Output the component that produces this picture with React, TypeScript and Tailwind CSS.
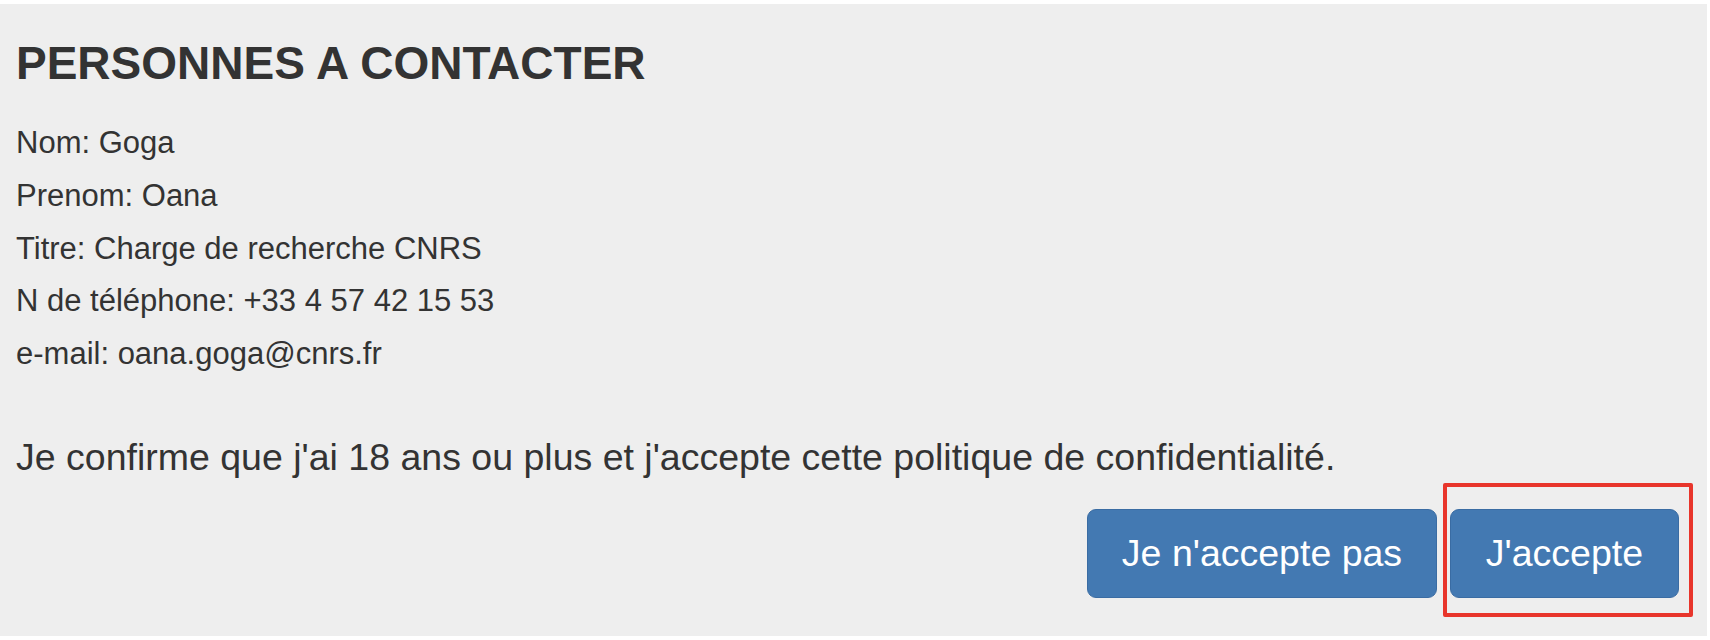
import React from "react";

export default function App() {
  const lines = [
    "Nom: Goga",
    "Prenom: Oana",
    "Titre: Charge de recherche CNRS",
    "N de téléphone: +33 4 57 42 15 53",
    "e-mail: oana.goga@cnrs.fr",
  ];
  return (
    <div className="w-[1710px] h-[640px] bg-white pt-[4px] pr-[3px] pb-[4px] font-['Liberation_Sans',Arial,sans-serif]">
      <div className="h-full bg-[#eeeeee] pl-[16px] pr-[28px] pt-[36px] flex flex-col text-[#333333]">
        <h2 className="text-[46px] leading-[46px] font-bold">PERSONNES A CONTACTER</h2>
        <div className="mt-[31px] flex flex-col">
          {lines.map((l) => (
            <p key={l} className="text-[31px] leading-[52.75px]">
              {l}
            </p>
          ))}
        </div>
        <p className="mt-[54px] text-[37.5px] leading-[44px]">
          Je confirme que j'ai 18 ans ou plus et j'accepte cette politique de confidentialité.
        </p>
        <div className="mt-[30px] flex justify-end gap-[13px]">
          <button className="h-[89px] w-[350px] rounded-[9px] bg-[#4379b2] border border-[#3a6ca3] text-white text-[37.5px] leading-none flex items-center justify-center">
            Je n'accepte pas
          </button>
          <div className="relative">
            <button className="h-[89px] w-[229px] rounded-[9px] bg-[#4379b2] border border-[#3a6ca3] text-white text-[37.5px] leading-none flex items-center justify-center">
              J'accepte
            </button>
            <div className="absolute left-[-7px] top-[-26px] w-[250px] h-[134px] border-4 border-[#e8352b] rounded-[2px] pointer-events-none" />
          </div>
        </div>
      </div>
    </div>
  );
}
